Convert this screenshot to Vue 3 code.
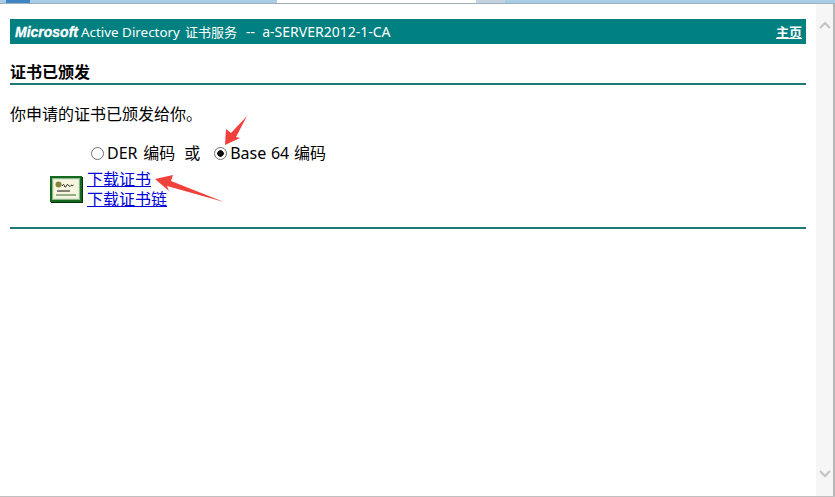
<template>
  <div class="window">
    <!-- browser chrome sliver at the top of the capture -->
    <div class="tabstrip">
      <span class="tab tab-edge"></span>
      <span class="tab tab-icon"></span>
      <span class="tab tab-blue"></span>
      <span class="tab tab-active"></span>
      <span class="tab tab-gray"></span>
      <span class="tab tab-rest"></span>
    </div>

    <div class="viewport">
      <main class="page">
        <header class="banner">
          <div class="banner-title">
            <i class="brand">Microsoft</i>
            <span class="product">Active Directory</span>
            <span class="service">证书服务</span>
            <span class="server">--&nbsp;&nbsp;a-SERVER2012-1-CA</span>
          </div>
          <a class="home" href="#">主页</a>
        </header>

        <h1 class="section-title">证书已颁发</h1>

        <p class="message">你申请的证书已颁发给你。</p>

        <div class="encoding">
          <label class="choice der">
            <input type="radio" name="enc" value="der" />
            <span>DER 编码</span>
          </label>
          <span class="or">或</span>
          <label class="choice">
            <input type="radio" name="enc" value="b64" checked />
            <span>Base 64 编码</span>
          </label>
        </div>

        <div class="downloads">
          <svg class="cert" width="33" height="27" viewBox="0 0 33 27">
            <rect x="1" y="1" width="32" height="26" fill="#06300c" />
            <rect x="0" y="0" width="32" height="26" fill="#14691f" />
            <rect x="2" y="2" width="28" height="22" fill="#dfe8d2" />
            <rect x="2.500" y="2.500" width="27" height="21" fill="none" stroke="#3c8a48" stroke-width="1" stroke-dasharray="1 1" />
            <rect x="4" y="4" width="24" height="18" fill="#f7f4df" />
            <circle cx="8.500" cy="8.500" r="3" fill="#86843a" />
            <path d="M12 10c1-2 2-2 2.500 0s1.500 1 2-.5 1.500-1 2 0 2 1 2.500 0 1.500 1 2.500-.5" fill="none" stroke="#111" stroke-width="1" />
            <path d="M7 15h13" stroke="#111" stroke-width="1" />
            <path d="M6 19h20" stroke="#6f9a6c" stroke-width="1.500" />
          </svg>
          <div class="links">
            <a href="#">下载证书</a>
            <a href="#">下载证书链</a>
          </div>
        </div>

        <hr class="rule" />
      </main>

      <div class="scrollbar">
        <svg width="12" height="8" viewBox="0 0 12 8"><path d="M1 7l5-5 5 5" fill="none" stroke="#c4c4c4" stroke-width="2.200" /></svg>
        <svg width="12" height="8" viewBox="0 0 12 8"><path d="M1 1l5 5 5-5" fill="none" stroke="#c4c4c4" stroke-width="2.200" /></svg>
      </div>
    </div>

    <div class="bottom-edge"></div>

    <!-- red annotation arrows drawn on top of the screenshot -->
    <svg class="annotations" width="835" height="497" viewBox="0 0 835 497">
      <path d="M247 116L236 137L240 138L225 145L226 129L231 133Z" fill="#f0413c" />
      <path d="M155 179L173 175L171 181L224 202L167 186L169 191Z" fill="#f0413c" />
    </svg>
  </div>
</template>

<script setup>
</script>

<style>
html, body {
  margin: 0;
  background: #fff;
  overflow: hidden;
}
</style>

<style scoped>
.window {
  position: relative;
  width: 835px;
  height: 497px;
  display: flex;
  flex-direction: column;
  overflow: hidden;
  background: #fff;
  font-family: "Noto Sans", "Noto Sans CJK SC", sans-serif;
  color: #000;
}

.tabstrip {
  display: flex;
  height: 3px;
  border-bottom: 1px solid #9fb0bd;
  flex: none;
}
.tab { display: block; height: 100%; }
.tab-edge { width: 6px; background: #a9cde6; }
.tab-icon { width: 24px; background: #3f86c4; }
.tab-blue { width: 247px; background: #a9cde6; }
.tab-active { width: 199px; background: #fff; }
.tab-gray { width: 29px; background: #c5d3df; }
.tab-rest { flex: 1; background: #a9cde6; }

.viewport {
  flex: 1;
  display: flex;
  min-height: 0;
}

.page {
  flex: 1;
  min-width: 0;
  padding: 15px 10px 0;
}

.banner {
  display: flex;
  align-items: center;
  justify-content: space-between;
  height: 25px;
  padding: 0 4px 0 5px;
  background: #008080;
  color: #fff;
  font-size: 13px;
}
.banner-title {
  display: flex;
  align-items: baseline;
}
.brand {
  font-family: "Liberation Sans", sans-serif;
  font-weight: 700;
  font-size: 14px;
  -webkit-text-stroke: 0.3px #fff;
  margin-right: 3px;
}
.product {
  font-size: 13.400px;
  margin-right: 5px;
}
.service {
  margin-right: 9px;
}
.server {
  font-size: 14px;
}
.home {
  color: #fff;
  font-weight: 700;
  font-size: 13px;
}

.section-title {
  margin: 18px 0 0;
  height: 21px;
  border-bottom: 2px solid #1f7a7a;
  font-size: 16px;
  line-height: 21px;
  font-weight: 700;
}

.message {
  margin: 18px 0 0;
  font-size: 16px;
  line-height: 22px;
}

.encoding {
  display: flex;
  align-items: center;
  margin: 17px 0 0 81px;
  font-size: 16px;
  line-height: 22px;
  word-spacing: 0.500px;
}
.der {
  word-spacing: 1.500px;
}
.choice {
  display: flex;
  align-items: center;
}
.choice input {
  appearance: none;
  width: 13px;
  height: 13px;
  margin: 0 3px 0 0;
  border: 1px solid #6f6f6f;
  border-radius: 50%;
  background: #fff;
  box-sizing: border-box;
}
.choice input:checked {
  background: radial-gradient(circle, #111 0 3px, #fff 3.500px);
}
.or {
  margin: 0 14px 0 9px;
}

.downloads {
  display: flex;
  align-items: center;
  margin: 5px 0 0 40px;
}
.cert {
  flex: none;
  margin-right: 4px;
}
.links {
  display: flex;
  flex-direction: column;
  align-items: flex-start;
  font-size: 16px;
  line-height: 20px;
}
.links a {
  color: #0000d8;
}

.rule {
  margin: 18px 0 0;
  height: 2px;
  border: 0;
  background: #1f7a7a;
}

.scrollbar {
  flex: none;
  width: 17px;
  margin-right: 2px;
  box-sizing: border-box;
  padding: 17px 0 18px;
  background: #f6f6f6;
  display: flex;
  flex-direction: column;
  align-items: center;
  justify-content: space-between;
  box-shadow: 2px 0 0 #b5b5b5;
}

.bottom-edge {
  flex: none;
  height: 1px;
  background: #c0c0c0;
}

.annotations {
  position: absolute;
  left: 0;
  top: 0;
  pointer-events: none;
}
</style>
